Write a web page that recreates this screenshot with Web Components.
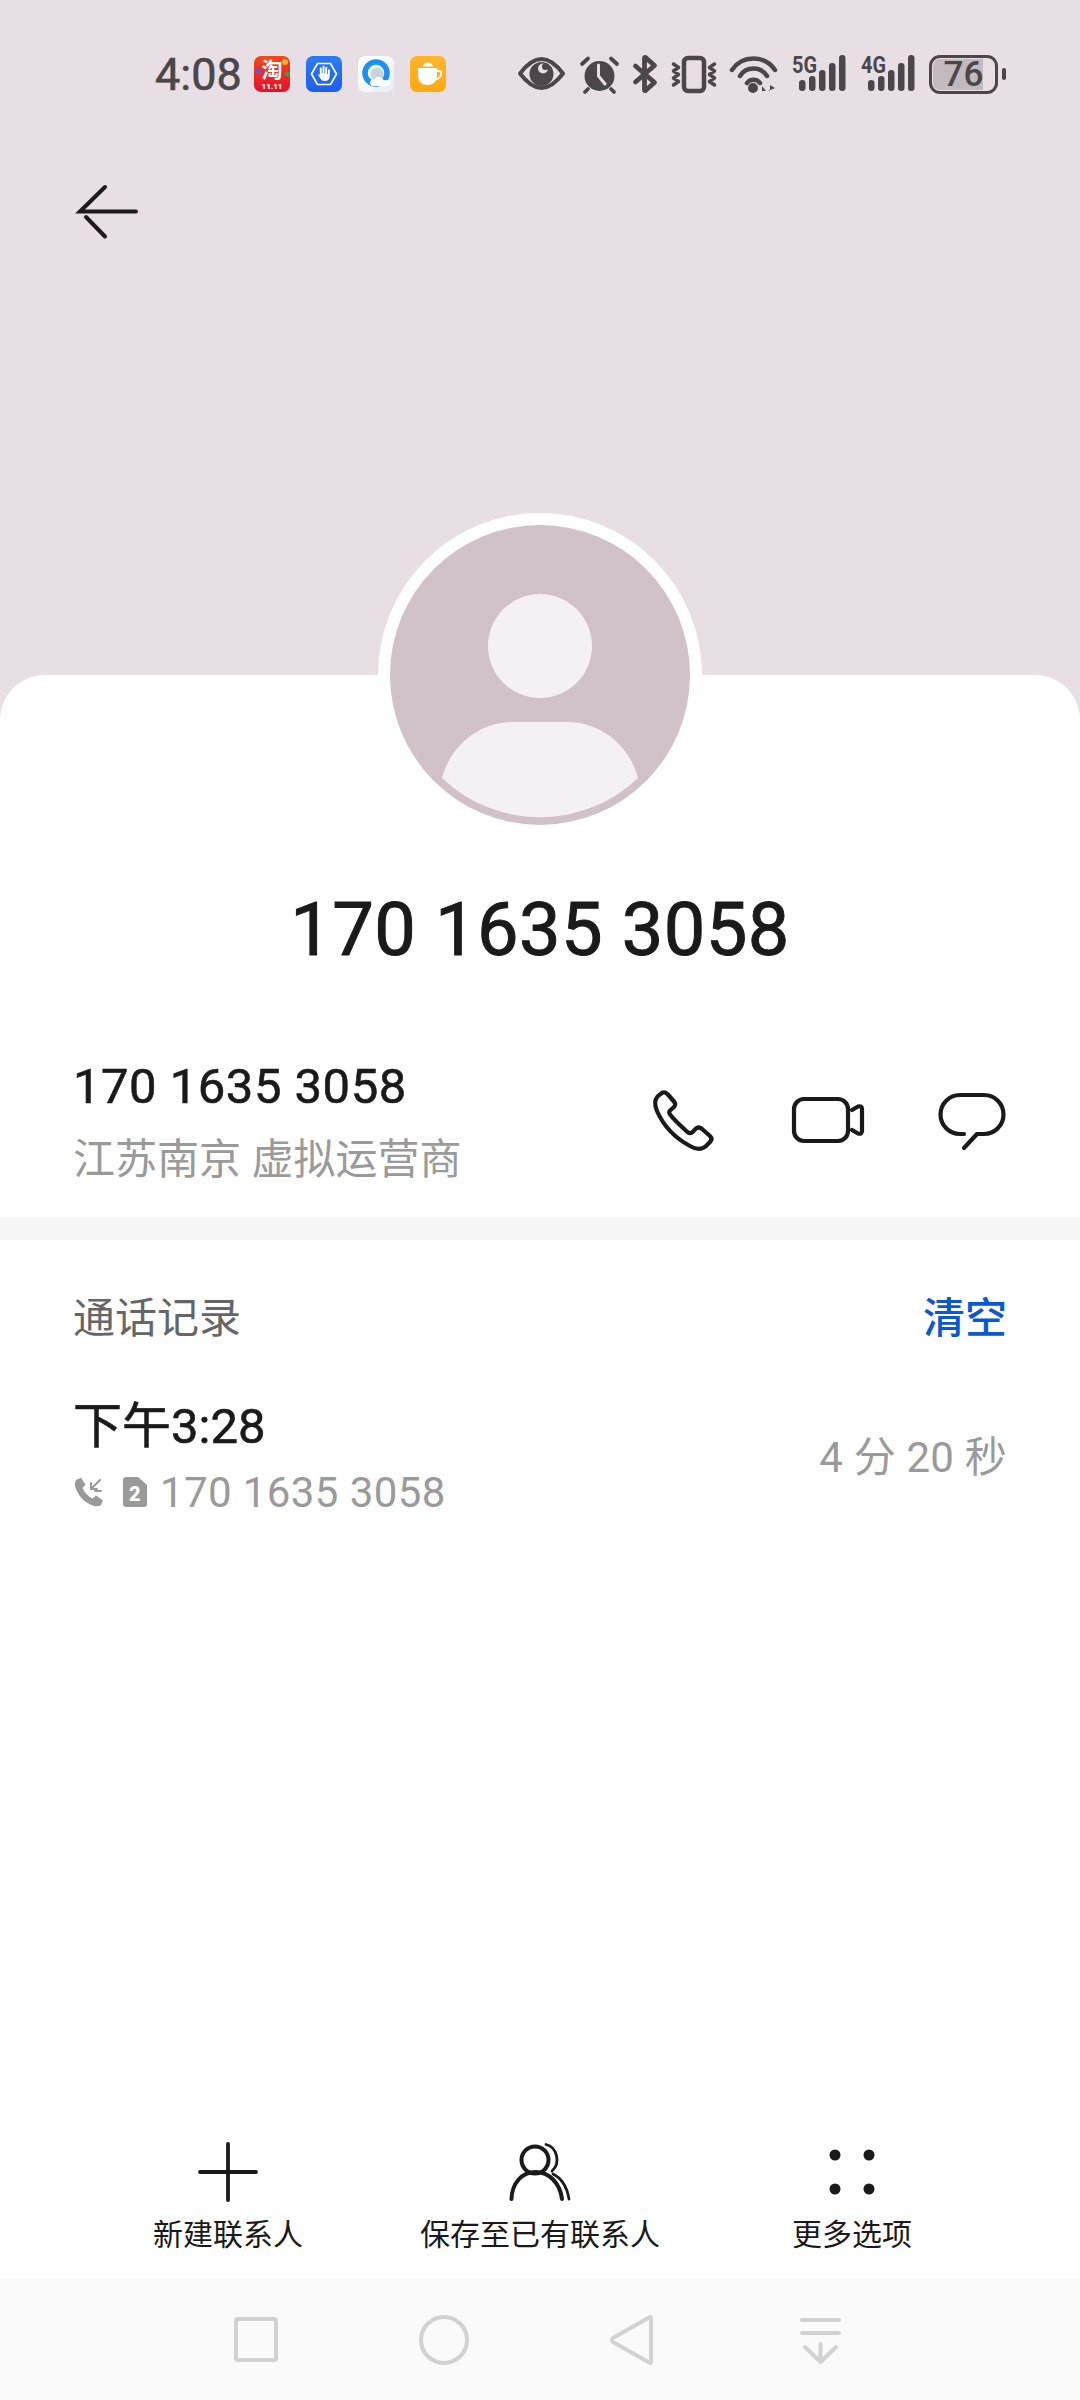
<!DOCTYPE html>
<html lang="zh">
<head>
<meta charset="utf-8">
<title>170 1635 3058</title>
<style>
html,body{margin:0;padding:0}
body{width:1080px;height:2400px;overflow:hidden;font-family:Roboto,"Noto Sans CJK SC",sans-serif;background:#e8dfe5}
</style>
</head>
<body>
<contact-page></contact-page>
<script>
class Base extends HTMLElement {
	constructor() {
		super();
		this.shadowDOM = this.attachShadow({mode:"open"});
	}
	connectedCallback(){
		this.render();
	}
}

class AppTile extends Base {
	render(){
		const kind = this.getAttribute("kind");
		const art = {
			taobao:`<svg width="36" height="36" viewBox="0 0 36 36"><defs><linearGradient id="t" x1="0" y1="0" x2="0" y2="1"><stop offset="0" stop-color="#f04a1c"/><stop offset="1" stop-color="#e60f2d"/></linearGradient></defs><rect width="36" height="36" rx="7" fill="url(#t)"/><circle cx="31" cy="6" r="3" fill="#e9b23a"/><circle cx="4" cy="15" r="3" fill="#7a4fb0"/><circle cx="33" cy="18" r="2.5" fill="#3f9a4a"/><text x="18" y="21" text-anchor="middle" font-size="21" font-weight="700" fill="#fff" font-family="Noto Sans CJK SC">淘</text><text x="18" y="33" text-anchor="middle" font-size="8" font-weight="900" fill="#fff" font-family="Roboto">11.11</text></svg>`,
			shield:`<svg width="36" height="36" viewBox="0 0 36 36"><defs><linearGradient id="b" x1="0" y1="0" x2="0" y2="1"><stop offset="0" stop-color="#2f7cf0"/><stop offset="1" stop-color="#1c5fee"/></linearGradient></defs><rect width="36" height="36" rx="7" fill="url(#b)"/><path d="M11.500 7.500H24.500L30.500 18L24.500 28.500H11.500L5.500 18Z" fill="none" stroke="#fff" stroke-width="1.600" stroke-linejoin="round"/><path d="M12.500 19.500L15 23.500Q16.500 25 19 25Q23 25 23.500 21L24 14.500Q24 13.300 23 13.300Q22 13.300 22 14.500V18H21.200V11.800Q21.200 10.700 20.200 10.700Q19.200 10.700 19.200 11.800V17.500H18.500V10.800Q18.500 9.700 17.500 9.700Q16.500 9.700 16.500 10.800V17.500H15.800V12.500Q15.800 11.400 14.800 11.400Q13.800 11.400 13.800 12.500V19.800L13.200 18.800Q12 17.800 11.700 18.800Z" fill="#fff"/></svg>`,
			browser:`<svg width="36" height="36" viewBox="0 0 36 36"><defs><linearGradient id="q" x1="0" y1="0" x2="1" y2="1"><stop offset="0" stop-color="#fff"/><stop offset="1" stop-color="#e8eef6"/></linearGradient></defs><rect width="36" height="36" rx="7" fill="url(#q)"/><circle cx="18" cy="17" r="11" fill="none" stroke="#1f8ff0" stroke-width="5.500"/><circle cx="19" cy="18" r="6.500" fill="#c9d3de"/><path d="M16 30Q12 30 12 26.500Q12 23.500 16 23.500Q18 20 22 21Q25 22 25.500 24Q31 23.500 32 27Q32 30 28 30Z" fill="#fff"/></svg>`,
			cup:`<svg width="36" height="36" viewBox="0 0 36 36"><defs><linearGradient id="c" x1="0" y1="0" x2="0" y2="1"><stop offset="0" stop-color="#ffb52e"/><stop offset="1" stop-color="#ffa90f"/></linearGradient></defs><rect width="36" height="36" rx="7" fill="url(#c)"/><path d="M13 10.500Q14 6.500 18 6.500Q22 6.500 23 10.500Z" fill="#fff"/><path d="M8 12H27V18Q27 29 17.500 29Q8 29 8 18Z" fill="#fff"/><path d="M27 15H29Q32 15 31 19Q29.500 23 25 23.500" fill="none" stroke="#fff" stroke-width="2"/></svg>`
		};
		this.shadowDOM.innerHTML = `<style>:host{display:block;width:36px;height:36px}svg{display:block;overflow:visible}</style>${art[kind]}`;
	}
}

class SignalBars extends Base {
	render(){
		const label = this.getAttribute("label");
		const off = 7;
		this.shadowDOM.innerHTML = `
		<style>
		:host{display:block;width:54px;height:38px}
		svg{display:block;overflow:visible}
		text{font:700 24px Roboto,sans-serif;fill:#4b4649}
		rect{fill:#4b4649}
		</style>
		<svg width="54" height="38" viewBox="0 0 54 38">
			<text x="0" y="18" textLength="25" lengthAdjust="spacingAndGlyphs">${label}</text>
			<rect x="${off}" y="25" width="6.500" height="11" rx="3.200"/>
			<rect x="${off+10}" y="21" width="6.500" height="15" rx="3.200"/>
			<rect x="${off+20}" y="15" width="6.500" height="21" rx="3.200"/>
			<rect x="${off+30}" y="8" width="6.500" height="28" rx="3.200"/>
			<rect x="${off+40}" y="0" width="6.500" height="36" rx="3.200"/>
		</svg>`;
	}
}

class BatteryLevel extends Base {
	render(){
		this.shadowDOM.innerHTML = `
		<style>
		:host{display:flex;align-items:center;gap:4px}
		.cell{box-sizing:border-box;width:69px;height:39px;border:3px solid #4b4649;border-radius:11px;padding:1px;}
		.fill{height:100%;border-radius:7px;background:linear-gradient(90deg,#c2babf 82%,transparent 82%);display:flex;align-items:center;justify-content:center;font:500 35px/1 Roboto,sans-serif;color:#4b4649}
		.nub{width:4px;height:12px;border-radius:2px;background:#4b4649}
		</style>
		<div class="cell"><div class="fill"><slot></slot></div></div>
		<div class="nub"></div>`;
	}
}

class StatusBar extends Base {
	render(){
		this.shadowDOM.innerHTML = `
		<style>
		:host{display:flex;align-items:center;height:148px;box-sizing:border-box;padding:0 74px 0 155px;color:#4b4649}
		.time{font:400 45px/1 Roboto,sans-serif;width:99px;-webkit-text-stroke:.6px #4b4649}
		.apps{display:flex;gap:16px}
		.sys{display:flex;align-items:center;margin-left:auto}
		svg{display:block;overflow:visible}
		.sys > *{flex:none}
		</style>
		<span class="time">4:08</span>
		<div class="apps">
			<app-tile kind="taobao"></app-tile>
			<app-tile kind="shield"></app-tile>
			<app-tile kind="browser"></app-tile>
			<app-tile kind="cup"></app-tile>
		</div>
		<div class="sys">
			<svg width="47" height="33" viewBox="0 0 47 33" style="margin-right:15px;margin-top:-2px"><path d="M2 16.500C10 6 18 2 23.500 2C29 2 37 6 45 16.500C37 27 29 31 23.500 31C18 31 10 27 2 16.500Z" fill="none" stroke="#4b4649" stroke-width="4" stroke-linejoin="round"/><circle cx="23.500" cy="17" r="12" fill="#4b4649"/><circle cx="25" cy="11.500" r="5" fill="#e8dfe5"/><circle cx="27.500" cy="9.500" r="3.500" fill="#4b4649"/></svg>
			<svg width="39" height="37" viewBox="0 0 39 37" style="margin-right:14px"><circle cx="19.500" cy="20" r="15" fill="#4b4649"/><path d="M18.500 9V20L25 28" fill="none" stroke="#e8dfe5" stroke-width="3" stroke-linecap="round"/><path d="M2 8L8 2.500M37 8L31 2.500M8 33L5 36M31 33L34 36" stroke="#4b4649" stroke-width="3.800" stroke-linecap="round"/></svg>
			<svg width="24" height="38" viewBox="0 0 24 38" style="margin-right:14px"><path d="M2.500 11L21.500 27.500L12.500 35.500Q11.500 36 11.500 35V3Q11.500 2 12.500 2.500L21.500 10.500L2.500 27" fill="none" stroke="#4b4649" stroke-width="4.800" stroke-linejoin="round" stroke-linecap="round"/></svg>
			<svg width="46" height="37" viewBox="0 0 46 37" style="margin-right:13px"><rect x="13" y="2" width="20" height="33" rx="4" fill="none" stroke="#4b4649" stroke-width="4.500"/><path d="M2.500 8L7.500 11.500L2.500 15L7.500 18.500L2.500 22L7.500 25.500L2.500 29M43.500 8L38.500 11.500L43.500 15L38.500 18.500L43.500 22L38.500 25.500L43.500 29" fill="none" stroke="#4b4649" stroke-width="3.500" stroke-linejoin="round" stroke-linecap="round"/></svg>
			<svg width="47" height="37" viewBox="0 0 47 37" style="margin-right:15px"><path d="M2 14A26 26 0 0 1 45 14M10 20A16 16 0 0 1 37 20M17 27A8 8 0 0 1 30 27" fill="none" stroke="#4b4649" stroke-width="4.500" stroke-linecap="round"/><circle cx="23" cy="32" r="5" fill="#4b4649"/><path d="M32 35V30L36 35ZM38 35V29.500L38 35L40 35V29L45 32Z" fill="#4b4649"/></svg>
			<signal-bars label="5G" style="margin-right:15px"></signal-bars>
			<signal-bars label="4G" style="margin-right:14px"></signal-bars>
			<battery-level>76</battery-level>
		</div>`;
	}
}

class TopBar extends Base {
	render(){
		this.shadowDOM.innerHTML = `
		<style>
		:host{display:flex;align-items:center;height:127px;box-sizing:border-box;padding-left:78px}
		svg{display:block;overflow:visible}
		</style>
		<svg width="60" height="54" viewBox="0 0 60 54" fill="none" stroke="#1c1a1b" stroke-width="4" stroke-linecap="round"><path d="M27 2L2 26.500H58"/><path d="M8 32L27 51.500"/></svg>`;
	}
}

class AvatarBadge extends Base {
	render(){
		this.shadowDOM.innerHTML = `
		<style>
		:host{display:flex;align-items:center;justify-content:center;width:324px;height:324px;border-radius:50%;background:#fff;margin-top:-162px;align-self:center}
		svg{display:block}
		</style>
		<svg width="300" height="300" viewBox="0 0 300 300">
			<circle cx="150" cy="150" r="150" fill="#d1c1c8"/>
			<circle cx="150" cy="121" r="52" fill="#f5f0f3"/>
			<path d="M52 253C60 222 88 197 123 197H177C212 197 240 222 248 253A142 142 0 0 1 52 253Z" fill="#f5f0f3"/>
		</svg>`;
	}
}

class NumberRow extends Base {
	render(){
		this.shadowDOM.innerHTML = `
		<style>
		:host{display:flex;align-items:flex-start;margin-top:72px;height:165px;box-sizing:border-box;padding:0 73px}
		.text{flex:1}
		.num{font:400 49px/70px Roboto,"Noto Sans CJK SC",sans-serif;color:#1a1a1a;letter-spacing:.5px;-webkit-text-stroke:.6px #1a1a1a}
		.loc{font:400 42px/70px Roboto,"Noto Sans CJK SC",sans-serif;color:#9a9a9a;margin-top:3px}
		.acts{display:flex;align-items:center;height:60px;margin-top:38px;margin-right:2px}
		svg{display:block;overflow:visible;fill:none;stroke:#1a1a1a;stroke-width:4.200;stroke-linecap:round;stroke-linejoin:round}
		</style>
		<div class="text">
			<div class="num"><slot name="number"></slot></div>
			<div class="loc"><slot name="place"></slot></div>
		</div>
		<div class="acts">
			<svg width="59" height="59" viewBox="0 0 59 59" style="margin-right:79px"><path d="M3.500 5.500L8 1.800Q11 .6 13.500 3L20 10.500Q22.500 13.500 20 16L16 19.500Q14.500 21 16 23.500C21 30 28 36 33.500 41Q36 43 38 41.500L42 37.500Q45 35.500 47.500 37.500L56 45Q59 48 56 51L52 55C47 59.500 42 58.500 36 55C22 47.500 10 36 3 20C.5 14 .5 9 3.500 5.500Z"/></svg>
			<svg width="72" height="46" viewBox="0 0 72 46" style="margin-right:75px"><rect x="2" y="2" width="54" height="42" rx="10"/><path d="M60 13L66 9.500Q70 8.500 70 12V34Q70 37.500 66 36.500L60 33"/></svg>
			<svg width="66" height="57" viewBox="0 0 66 57" style="margin-top:3px"><path d="M25 41H21A19.500 19.500 0 0 1 21 2H45A19.500 19.500 0 0 1 45 41H38L25 55"/></svg>
		</div>`;
	}
}

class CallLog extends Base {
	render(){
		this.shadowDOM.innerHTML = `
		<style>
		:host{display:block;flex:1;border-top:23px solid #f7f7f7;padding:0 73px;font-family:Roboto,"Noto Sans CJK SC",sans-serif}
		.head{display:flex;justify-content:space-between;align-items:center;height:60px;margin-top:44px;font-size:42px;color:#666}
		.clear{color:#0a59d0;font-weight:500}
		.item{display:flex;justify-content:space-between;align-items:center;margin-top:51px}
		.time{font-size:49px;font-weight:400;line-height:64px;color:#1a1a1a;-webkit-text-stroke:.6px #1a1a1a}
		.sub{display:flex;align-items:center;height:50px;margin-top:8px;font-size:42px;color:#9a9a9a;letter-spacing:.4px}
		.dur{font-size:42px;color:#9a9a9a;margin-top:-5px;letter-spacing:.2px}
		svg{display:block;overflow:visible;flex:none}
		</style>
		<div class="head"><span>通话记录</span><span class="clear">清空</span></div>
		<div class="item">
			<div>
				<div class="time">下午3:28</div>
				<div class="sub">
					<svg width="30" height="30" viewBox="0 0 30 30" style="margin-left:1px;margin-right:19px"><path d="M2 3L7 .8L11.500 7.500L8.500 11Q11.500 18 18.500 21.500L22 18.500L29 23.500L27 28Q24 30 20 29C11 26.500 3 18 1 9Q.8 5 2 3Z" fill="#9a9a9a"/><path d="M26 3L17 12M17 6V12H23M21 14H27" fill="none" stroke="#9a9a9a" stroke-width="2" stroke-linecap="round"/></svg>
					<svg width="24" height="30" viewBox="0 0 24 30" style="margin-right:13px"><path d="M3 0H15L24 8V27Q24 30 21 30H3Q0 30 0 27V3Q0 0 3 0Z" fill="#9a9a9a"/><text x="12" y="24" text-anchor="middle" font-size="20" font-weight="900" fill="#fff" font-family="Roboto">2</text></svg>
					<span>170 1635 3058</span>
				</div>
			</div>
			<div class="dur">4 分 20 秒</div>
		</div>`;
	}
}

class ActionItem extends Base {
	render(){
		this.shadowDOM.innerHTML = `
		<style>
		:host{display:flex;flex-direction:column;align-items:center;font:400 30px/40px Roboto,"Noto Sans CJK SC",sans-serif;color:#1a1a1a}
		.icon{height:62px;display:flex;align-items:center;justify-content:center;margin-bottom:12px}
		::slotted(svg){display:block;overflow:visible}
		</style>
		<div class="icon"><slot name="icon"></slot></div>
		<slot></slot>`;
	}
}

class ActionBar extends Base {
	render(){
		this.shadowDOM.innerHTML = `
		<style>
		:host{display:flex;box-sizing:border-box;height:138px;padding-left:153px}
		::slotted(:nth-child(2)){margin:0 132px 0 117px}
		</style>
		<slot></slot>`;
	}
}

class NavBar extends Base {
	render(){
		this.shadowDOM.innerHTML = `
		<style>
		:host{display:flex;align-items:center;height:121px;box-sizing:border-box;padding-left:234px;background:#fafafa}
		svg{display:block;overflow:visible;fill:none;stroke:#d2d2d2;stroke-width:4;stroke-linecap:round;stroke-linejoin:round}
		</style>
		<svg width="44" height="45" viewBox="0 0 44 45" style="margin-right:141px"><rect x="2" y="2" width="40" height="41" rx="2"/></svg>
		<svg width="50" height="50" viewBox="0 0 50 50" style="margin-right:141px"><circle cx="25" cy="25" r="23"/></svg>
		<svg width="43" height="50" viewBox="0 0 43 50" style="margin-right:147px"><path d="M41 3V47Q41 49 39 47.500L3 27Q1 25 3 23L39 2.500Q41 1 41 3Z"/></svg>
		<svg width="41" height="46" viewBox="0 0 41 46"><path d="M2 3H39M2 16H39M20.500 27V44M5 30L20.500 45L36 30" style="stroke-width:4"/></svg>`;
	}
}

class ContactSheet extends Base {
	render(){
		this.shadowDOM.innerHTML = `
		<style>
		:host{display:flex;flex-direction:column;height:1604px;margin-top:400px;background:#fff;border-radius:45px 45px 0 0}
		.title{margin-top:43px;text-align:center;font:400 74px/100px Roboto,sans-serif;color:#1a1a1a;letter-spacing:.4px;-webkit-text-stroke:1px #1a1a1a}
		</style>
		<avatar-badge></avatar-badge>
		<div class="title">170 1635 3058</div>
		<number-row>
			<span slot="number">170 1635 3058</span>
			<span slot="place">江苏南京 虚拟运营商</span>
		</number-row>
		<call-log></call-log>
		<action-bar>
			<action-item>
				<svg slot="icon" width="60" height="60" viewBox="0 0 60 60" fill="none" stroke="#1a1a1a" stroke-width="3.800" stroke-linecap="round"><path d="M30 2V58M2 30H58"/></svg>
				新建联系人
			</action-item>
			<action-item>
				<svg slot="icon" width="62" height="58" viewBox="0 0 62 58" fill="none" stroke="#1a1a1a" stroke-linecap="round"><circle cx="26" cy="17" r="13.500" stroke-width="4"/><path d="M2.500 56C3 40 13 29 26.500 29C40 29 51 40 53 56" stroke-width="4"/><path d="M37 1.500C48 4 52 20 43 28M44 31C52 35 58 44 60 56" stroke-width="2.800"/></svg>
				保存至已有联系人
			</action-item>
			<action-item>
				<svg slot="icon" width="46" height="46" viewBox="0 0 46 46" fill="#1a1a1a"><circle cx="6" cy="6" r="5.500"/><circle cx="40" cy="6" r="5.500"/><circle cx="6" cy="40" r="5.500"/><circle cx="40" cy="40" r="5.500"/></svg>
				更多选项
			</action-item>
		</action-bar>`;
	}
}

class ContactPage extends Base {
	render(){
		this.shadowDOM.innerHTML = `
		<style>:host{display:block;width:1080px;height:2400px}</style>
		<status-bar></status-bar>
		<top-bar></top-bar>
		<contact-sheet></contact-sheet>
		<nav-bar></nav-bar>`;
	}
}

window.customElements.define('app-tile', AppTile);
window.customElements.define('signal-bars', SignalBars);
window.customElements.define('battery-level', BatteryLevel);
window.customElements.define('status-bar', StatusBar);
window.customElements.define('top-bar', TopBar);
window.customElements.define('avatar-badge', AvatarBadge);
window.customElements.define('number-row', NumberRow);
window.customElements.define('call-log', CallLog);
window.customElements.define('action-item', ActionItem);
window.customElements.define('action-bar', ActionBar);
window.customElements.define('nav-bar', NavBar);
window.customElements.define('contact-sheet', ContactSheet);
window.customElements.define('contact-page', ContactPage);
</script>
</body>
</html>
